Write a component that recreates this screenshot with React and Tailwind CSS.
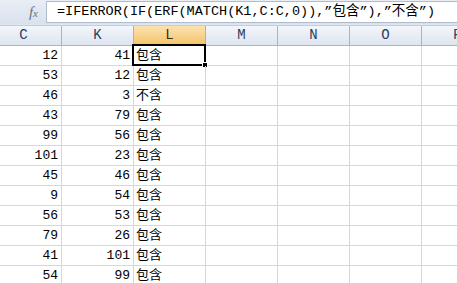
const cols = ["C", "K", "L", "M", "N", "O", "P"];
const widths = ["w-[62px]", "w-[72px]", "w-[72px]", "w-[72px]", "w-[72px]", "w-[72px]", "w-[72px]"];

const rows = [
  [12, 41, "包含"],
  [53, 12, "包含"],
  [46, 3, "不含"],
  [43, 79, "包含"],
  [99, 56, "包含"],
  [101, 23, "包含"],
  [45, 46, "包含"],
  [9, 54, "包含"],
  [56, 53, "包含"],
  [79, 26, "包含"],
  [41, 101, "包含"],
  [54, 99, "包含"],
];

const mono = "font-['Liberation_Mono','Noto_Sans_CJK_SC',monospace]";

export default function App() {
  return (
    <div className={`w-[457px] h-[283px] overflow-hidden bg-white text-black ${mono}`}>
      {/* 编辑栏 */}
      <div className="flex h-[24px] bg-gradient-to-b from-[#e9eef6] to-[#d9e2ee]">
        <div className="w-[46px] flex items-center justify-end pr-[8px]">
          <span className="font-['Liberation_Serif',serif] italic text-[15px] text-[#6b7380] leading-none">
            f<span className="text-[11px]">x</span>
          </span>
        </div>
        <div className="flex-1 my-[1px] bg-white border border-[#aebccd] border-r-0 flex items-center pl-[10px] text-[13.5px] leading-none whitespace-nowrap">
          =IFERROR(IF(ERF(MATCH(K1,C:C,0)),”包含”),”不含”)
        </div>
      </div>
      <div className="h-[2px] bg-[#dfe6ef] border-b border-[#c3cedb]" />

      {/* 列标题 */}
      <div className="flex h-[20px] border-b border-[#9eb6ce]">
        {cols.map((c, i) => (
          <div
            key={c}
            className={`${widths[i]} shrink-0 flex items-center justify-center border-r border-[#9eb6ce] text-[14px] ${
              c === "L"
                ? "bg-gradient-to-b from-[#fbe2b0] to-[#f3c366] text-[#3b2a10]"
                : "bg-gradient-to-b from-[#f3f6fb] to-[#dde5f0] text-[#2a3d5c]"
            } ${c === "C" ? "pr-[14px]" : ""}`}
          >
            {c}
          </div>
        ))}
      </div>

      {/* 数据 */}
      {rows.map((r, ri) => (
        <div key={ri} className="flex h-[20px] border-b border-[#d0d7e5]">
          {cols.map((c, i) => {
            const v = i === 0 ? r[0] : i === 1 ? r[1] : i === 2 ? r[2] : "";
            return (
              <div
                key={c}
                className={`${widths[i]} shrink-0 relative flex items-center border-r border-[#d0d7e5] text-[13px] leading-none ${
                  i < 2 ? "justify-end pr-[3px]" : "justify-start pl-[2px]"
                }`}
              >
                {v}
                {ri === 0 && i === 2 && (
                  <div className="absolute left-[-2px] top-[-2px] right-[-1px] bottom-[-1px] border-2 border-black">
                    <div className="absolute right-[-4px] bottom-[-4px] w-[6px] h-[6px] bg-black border border-white" />
                  </div>
                )}
              </div>
            );
          })}
        </div>
      ))}
    </div>
  );
}
